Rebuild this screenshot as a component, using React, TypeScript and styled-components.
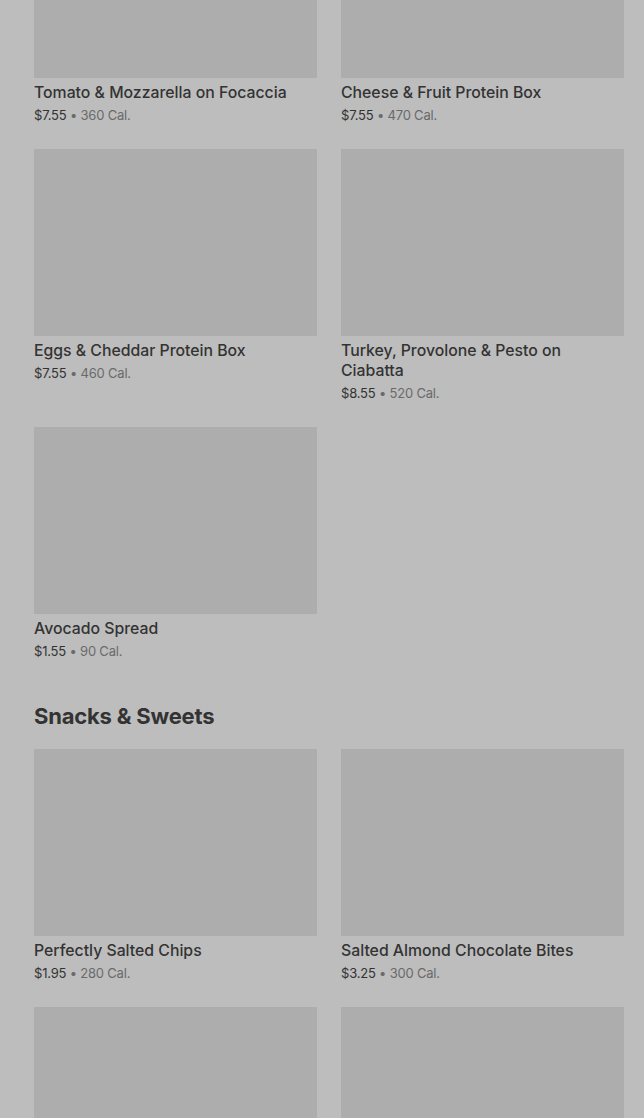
import React from "react";
import styled, { createGlobalStyle } from "styled-components";

const Global = createGlobalStyle`
  html, body { margin: 0; padding: 0; background: #bdbdbd; overflow: hidden; }
  body { font-family: Inter, "Noto Sans", sans-serif; color: #333; }
  * { box-sizing: border-box; }
`;

const Page = styled.div`
  width: 644px;
  height: 1118px;
  overflow: hidden;
  background: #bdbdbd;
`;

const Scroll = styled.div`
  margin-top: -109px;
  padding: 0 20px 0 34px;
  display: flex;
  flex-direction: column;
`;

const Section = styled.section<{ $gapTop?: number }>`
  display: flex;
  flex-direction: column;
  margin-top: ${(p) => p.$gapTop ?? 0}px;
`;

const Heading = styled.h2`
  margin: 0 0 19px;
  font-size: 22px;
  line-height: 28px;
  font-weight: 700;
  letter-spacing: -0.2px;
  color: #333;
`;

const Grid = styled.div`
  display: grid;
  grid-template-columns: 283px 283px;
  column-gap: 24px;
  row-gap: 24px;
  align-items: start;
`;

const Card = styled.div`
  display: flex;
  flex-direction: column;
`;

const Thumb = styled.div`
  height: 187px;
  background: #adadad;
`;

const Title = styled.div`
  margin-top: 5px;
  font-size: 15.8px;
  line-height: 20px;
  font-weight: 500;
  color: #333;
  padding-right: 10px;
`;

const Meta = styled.div`
  margin-top: 2px;
  font-size: 13px;
  line-height: 20px;
  color: #6a6a6a;
  letter-spacing: -0.2px;
`;

const Price = styled.span`
  color: #333;
`;

type Item = { name?: string; price?: string; cal?: string };

const ItemCard = ({ item }: { item: Item }) => (
  <Card>
    <Thumb />
    {item.name && <Title>{item.name}</Title>}
    {item.price && (
      <Meta>
        <Price>{item.price}</Price> • {item.cal}
      </Meta>
    )}
  </Card>
);

const first: Item[] = [
  { name: "Tomato & Mozzarella on Focaccia", price: "$7.55", cal: "360 Cal." },
  { name: "Cheese & Fruit Protein Box", price: "$7.55", cal: "470 Cal." },
  { name: "Eggs & Cheddar Protein Box", price: "$7.55", cal: "460 Cal." },
  { name: "Turkey, Provolone & Pesto on Ciabatta", price: "$8.55", cal: "520 Cal." },
  { name: "Avocado Spread", price: "$1.55", cal: "90 Cal." },
];

const snacks: Item[] = [
  { name: "Perfectly Salted Chips", price: "$1.95", cal: "280 Cal." },
  { name: "Salted Almond Chocolate Bites", price: "$3.25", cal: "300 Cal." },
  {},
  {},
];

export default function App() {
  return (
    <Page>
      <Global />
      <Scroll>
        <Section>
          <Grid>
            {first.map((it, i) => (
              <ItemCard key={i} item={it} />
            ))}
          </Grid>
        </Section>
        <Section $gapTop={41}>
          <Heading>Snacks &amp; Sweets</Heading>
          <Grid>
            {snacks.map((it, i) => (
              <ItemCard key={i} item={it} />
            ))}
          </Grid>
        </Section>
      </Scroll>
    </Page>
  );
}
